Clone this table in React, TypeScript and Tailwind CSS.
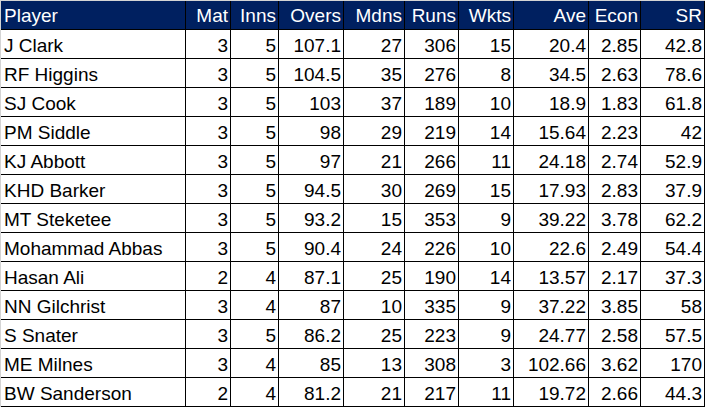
const headers = ["Player", "Mat", "Inns", "Overs", "Mdns", "Runs", "Wkts", "Ave", "Econ", "SR"];

const rows: (string | number)[][] = [
  ["J Clark", 3, 5, "107.1", 27, 306, 15, "20.4", "2.85", "42.8"],
  ["RF Higgins", 3, 5, "104.5", 35, 276, 8, "34.5", "2.63", "78.6"],
  ["SJ Cook", 3, 5, "103", 37, 189, 10, "18.9", "1.83", "61.8"],
  ["PM Siddle", 3, 5, "98", 29, 219, 14, "15.64", "2.23", "42"],
  ["KJ Abbott", 3, 5, "97", 21, 266, 11, "24.18", "2.74", "52.9"],
  ["KHD Barker", 3, 5, "94.5", 30, 269, 15, "17.93", "2.83", "37.9"],
  ["MT Steketee", 3, 5, "93.2", 15, 353, 9, "39.22", "3.78", "62.2"],
  ["Mohammad Abbas", 3, 5, "90.4", 24, 226, 10, "22.6", "2.49", "54.4"],
  ["Hasan Ali", 2, 4, "87.1", 25, 190, 14, "13.57", "2.17", "37.3"],
  ["NN Gilchrist", 3, 4, "87", 10, 335, 9, "37.22", "3.85", "58"],
  ["S Snater", 3, 5, "86.2", 25, 223, 9, "24.77", "2.58", "57.5"],
  ["ME Milnes", 3, 4, "85", 13, 308, 3, "102.66", "3.62", "170"],
  ["BW Sanderson", 2, 4, "81.2", 21, 217, 11, "19.72", "2.66", "44.3"],
];

export default function App() {
  return (
    <div className="w-[706px] h-[407px] bg-white font-['Liberation_Sans',Arial,sans-serif] text-[19px]">
      <div className="w-[705px] border-t border-l border-[#d4d4d4]">
        <div className="grid w-[704px] grid-cols-[184px_44px_47px_64px_60px_53px_54px_74px_51px_63px] gap-px bg-black border-b border-r border-black">
          {headers.map((h, i) => (
            <div
              key={h}
              className={`h-[28px] bg-[#002060] text-white leading-[24px] pt-[3px] whitespace-nowrap ${i === 0 ? "pl-[3px] text-left" : "pr-[2px] text-right"}`}
            >
              {h}
            </div>
          ))}
          {rows.map((r) =>
            r.map((v, i) => (
              <div
                key={`${r[0]}-${i}`}
                className={`h-[28px] bg-white text-black leading-[24px] pt-[4px] whitespace-nowrap ${i === 0 ? "pl-[3px] text-left" : "pr-[2px] text-right"}`}
              >
                {v}
              </div>
            ))
          )}
        </div>
      </div>
    </div>
  );
}
